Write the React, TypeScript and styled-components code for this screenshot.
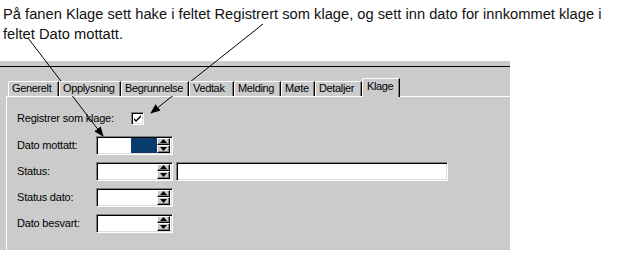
import React from 'react'
import styled, { createGlobalStyle } from 'styled-components'

const GlobalStyle = createGlobalStyle`
  body {
    margin: 0;
    background: #ffffff;
  }
`

const tabs = [
  { label: 'Generelt', width: 51 },
  { label: 'Opplysning', width: 62 },
  { label: 'Begrunnelse', width: 68 },
  { label: 'Vedtak', width: 45 },
  { label: 'Melding', width: 47 },
  { label: 'Møte', width: 34 },
  { label: 'Detaljer', width: 47 },
  { label: 'Klage', width: 38, active: true },
]

const SpinBox: React.FC<{ selected?: boolean }> = ({ selected }) => (
  <Spin>
    <Field>{selected && <Selection />}</Field>
    <Buttons>
      <SpinButton>
        <svg width="7" height="4" viewBox="0 0 7 4"><path d="M3.5 0L7 4H0z" fill="#000" /></svg>
      </SpinButton>
      <SpinButton>
        <svg width="7" height="4" viewBox="0 0 7 4"><path d="M0 0H7L3.5 4z" fill="#000" /></svg>
      </SpinButton>
    </Buttons>
  </Spin>
)

const App: React.FC = () => {
  return (
    <Page>
      <GlobalStyle />
      <Caption>
        På fanen Klage sett hake i feltet Registrert som klage, og sett inn dato for innkommet klage i
        <br />
        feltet Dato mottatt.
      </Caption>
      <Window>
        <TopRule />
        <TabList>
          {tabs.map((t) => (
            <Tab key={t.label} w={t.width} active={!!t.active}>
              {t.label}
            </Tab>
          ))}
        </TabList>
        <TabPage>
          <CheckRow>
            <Label>Registrer som klage:</Label>
            <CheckBox>
              <svg width="9" height="9" viewBox="0 0 9 9">
                <path d="M1 4l2 2 5-5v2l-5 5-2-2z" fill="#000" />
              </svg>
            </CheckBox>
          </CheckRow>
          <Row>
            <Label w={79}>Dato mottatt:</Label>
            <SpinBox selected />
          </Row>
          <Row>
            <Label w={79}>Status:</Label>
            <SpinBox />
            <TextInput />
          </Row>
          <Row>
            <Label w={79}>Status dato:</Label>
            <SpinBox />
          </Row>
          <Row>
            <Label w={79}>Dato besvart:</Label>
            <SpinBox />
          </Row>
        </TabPage>
      </Window>
      <Arrows width="617" height="256" viewBox="0 0 617 256">
        <defs>
          <marker id="head" markerWidth="10" markerHeight="8" refX="9" refY="4" orient="auto" markerUnits="userSpaceOnUse">
            <path d="M0 0L10 4L0 8z" fill="#000" />
          </marker>
        </defs>
        <line x1="28" y1="38" x2="103" y2="136" stroke="#000" strokeWidth="1" markerEnd="url(#head)" />
        <line x1="263" y1="24" x2="151" y2="113" stroke="#000" strokeWidth="1" markerEnd="url(#head)" />
      </Arrows>
    </Page>
  )
}

export default App

const Page = styled.div`
  position: relative;
  width: 617px;
  height: 256px;
  overflow: hidden;
`

const Caption = styled.div`
  padding: 4px 0 0 3px;
  height: 61px;
  box-sizing: border-box;
  font-family: 'Liberation Sans', Arial, sans-serif;
  font-size: 14.7px;
  line-height: 20px;
  color: #111;
  white-space: nowrap;
`

const Window = styled.div`
  width: 510px;
  height: 189px;
  background: #cbcbcb;
  padding-top: 5px;
  box-sizing: border-box;
  display: flex;
  flex-direction: column;
  font-family: 'Liberation Sans', Arial, sans-serif;
  font-size: 11px;
  letter-spacing: -0.2px;
  color: #000;
`

const TopRule = styled.div`
  height: 1px;
  background: #000;
`

const TabList = styled.div`
  display: flex;
  align-items: flex-end;
  margin: 11px 0 0 8px;
  height: 18px;
  position: relative;
  z-index: 1;
`

const Tab = styled.div<{ w: number; active: boolean }>`
  width: ${({ w }) => w}px;
  height: ${({ active }) => (active ? 19 : 15)}px;
  margin-bottom: ${({ active }) => (active ? -1 : 0)}px;
  box-sizing: border-box;
  border-top: 1px solid #fff;
  border-left: 1px solid #fff;
  border-right: 1px solid #000;
  border-top-left-radius: 2px;
  box-shadow: inset -1px 0 #808080;
  background: #cbcbcb;
  padding: ${({ active }) => (active ? '1px 0 0 4px' : '0 0 0 3px')};
  line-height: 13px;
  letter-spacing: -0.35px;
  white-space: nowrap;
`

const TabPage = styled.div`
  flex: 1;
  margin-left: 6px;
  border-top: 1px solid #fff;
  border-left: 1px solid #fff;
  padding: 7px 0 0 10px;
`

const Row = styled.div`
  display: flex;
  align-items: center;
  height: 26px;
`

const CheckRow = styled(Row)`
  height: 28px;
`

const Label = styled.div<{ w?: number }>`
  width: ${({ w }) => (w ? `${w}px` : 'auto')};
  flex: none;
`

const CheckBox = styled.div`
  width: 13px;
  height: 13px;
  margin-left: 17px;
  box-sizing: border-box;
  background: #fff;
  border-top: 1px solid #808080;
  border-left: 1px solid #808080;
  border-bottom: 1px solid #fff;
  border-right: 1px solid #fff;
  box-shadow: inset 1px 1px #000, inset -1px -1px #dcdcdc;
  display: flex;
  align-items: center;
  justify-content: center;
`

const Sunken = styled.div`
  box-sizing: border-box;
  background: #fff;
  border-top: 1px solid #808080;
  border-left: 1px solid #808080;
  border-bottom: 1px solid #fff;
  border-right: 1px solid #fff;
  box-shadow: inset 1px 1px #000, inset -1px -1px #dcdcdc;
`

const Spin = styled(Sunken)`
  width: 77px;
  height: 19px;
  display: flex;
  padding: 2px;
`

const Field = styled.div`
  flex: 1;
  display: flex;
  justify-content: flex-end;
  margin: -1px 0;
`

const Selection = styled.div`
  width: 26px;
  background: #0b3a6d;
`

const Buttons = styled.div`
  width: 13px;
  display: flex;
  flex-direction: column;
  margin: -1px 0;
`

const SpinButton = styled.div`
  flex: 1;
  box-sizing: border-box;
  background: #cbcbcb;
  border-top: 1px solid #fff;
  border-left: 1px solid #fff;
  border-right: 1px solid #000;
  border-bottom: 1px solid #000;
  box-shadow: inset -1px -1px #808080;
  display: flex;
  align-items: center;
  justify-content: center;
`

const TextInput = styled(Sunken)`
  width: 272px;
  height: 19px;
  margin-left: 3px;
`

const Arrows = styled.svg`
  position: absolute;
  left: 0;
  top: 0;
  pointer-events: none;
`
